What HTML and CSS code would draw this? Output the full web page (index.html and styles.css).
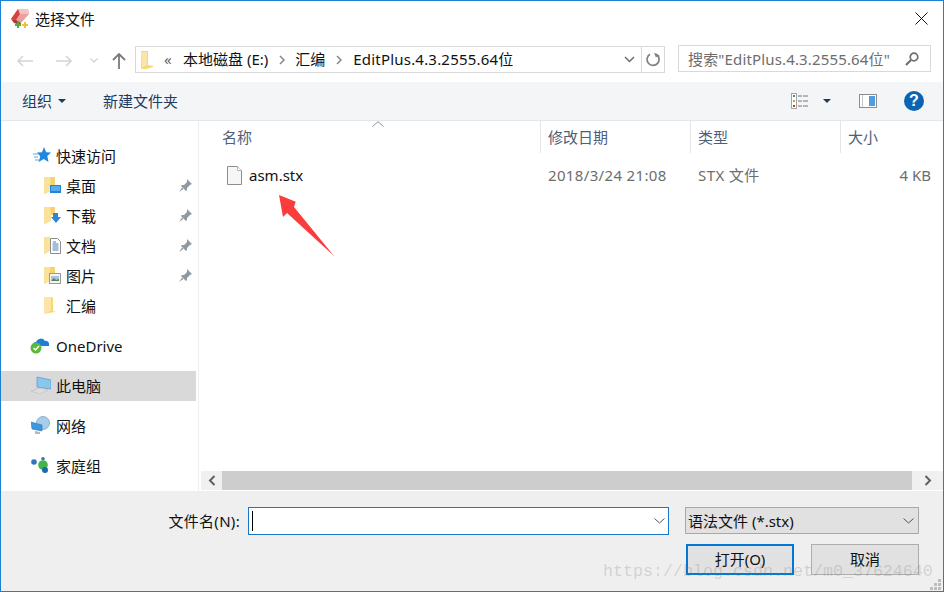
FILE: index.html
```html
<!DOCTYPE html>
<html lang="zh">
<head>
<meta charset="utf-8">
<title>选择文件</title>
<link rel="stylesheet" href="styles.css">
</head>
<body>
<div class="window">
  <div class="titlebar">
    <svg class="app-icon" width="20" height="20" viewBox="0 0 20 20"><path d="M1 11 8 1h10l1 5-8 9z" fill="#e8a0a0"/><path d="M1 11 8 1h5L6 12z" fill="#d8413c"/><path d="M1 11l5 1 5 3-1 2-6-2z" fill="#a83a34"/><path d="M8 1h10l1 5h-9z" fill="#f1c4c0"/><path d="M7 14h2v2h2v2H9v2H7v-2H5v-2h2z" fill="#57a845"/><path d="M14 14h2v2h2v2h-2v2h-2v-2h-2v-2h2z" fill="#e6c53d"/></svg>
    <span class="title">选择文件</span>
    <svg class="close" width="13" height="13" viewBox="0 0 13 13"><path d="M.5.5l12 12M12.500.5l-12 12" stroke="#111" fill="none"/></svg>
  </div>
  <div class="navrow">
    <svg class="nav-back" width="16" height="12" viewBox="0 0 16 12"><path d="M6 1 1 6l5 5M1 6h15" stroke="#d3d3d3" stroke-width="1.500" fill="none"/></svg>
    <svg class="nav-fwd" width="16" height="12" viewBox="0 0 16 12"><path d="M10 1l5 5-5 5M15 6H0" stroke="#d3d3d3" stroke-width="1.500" fill="none"/></svg>
    <svg class="nav-down" width="8" height="5" viewBox="0 0 8 5"><path d="M.5.500 4 4 7.500.500" stroke="#d3d3d3" stroke-width="1.300" fill="none"/></svg>
    <svg class="nav-up" width="14" height="16" viewBox="0 0 14 16"><path d="M1 7l6-6 6 6M7 1v15" stroke="#7a7a7a" stroke-width="1.800" fill="none"/></svg>
    <div class="address">
      <svg class="addr-folder" width="12" height="18" viewBox="0 0 12 18"><path d="M0 0h7v14l5 1v1l-7 2H1l-1-1z" fill="#f8d775"/><path d="M0 1h6v13l-5 3z" fill="#fbe6a8"/></svg>
      <span class="addr-more">«</span>
      <span class="crumb">本地磁盘 (E:)</span>
      <svg class="crumb-sep" width="6" height="10" viewBox="0 0 6 10"><path d="M1 1l4 4-4 4" stroke="#858585" stroke-width="1.500" fill="none"/></svg>
      <span class="crumb">汇编</span>
      <svg class="crumb-sep" width="6" height="10" viewBox="0 0 6 10"><path d="M1 1l4 4-4 4" stroke="#858585" stroke-width="1.500" fill="none"/></svg>
      <span class="crumb crumb-long">EditPlus.4.3.2555.64位</span>
      <svg class="addr-drop" width="11" height="7" viewBox="0 0 11 7"><path d="M1 1l4.500 4.500L10 1" stroke="#6d6d6d" stroke-width="1.500" fill="none"/></svg>
      <div class="addr-refresh">
        <svg width="15" height="15" viewBox="0 0 15 15"><path d="M10.300 2.300A6 6 0 1 1 4 2.200" stroke="#7f7f7f" stroke-width="1.700" fill="none"/><path d="M9 0v5h4z" fill="#7f7f7f" transform="rotate(-20 10 3)"/></svg>
      </div>
    </div>
    <div class="search">
      <span class="search-text">搜索"EditPlus.4.3.2555.64位"</span>
      <svg width="14" height="14" viewBox="0 0 14 14"><circle cx="9" cy="5" r="3.800" stroke="#6f6f6f" stroke-width="1.700" fill="none"/><path d="M6 8l-5 5" stroke="#6f6f6f" stroke-width="2.200"/></svg>
    </div>
  </div>
  <div class="toolbar">
    <span class="tool">组织</span>
    <span class="tool-caret"></span>
    <span class="tool tool-new">新建文件夹</span>
    <span class="tool-space"></span>
    <svg class="view-icon" width="18" height="16" viewBox="0 0 18 16"><rect x=".5" y=".5" width="5" height="15" fill="#fff" stroke="#a5a5a5"/><rect x="2" y="2" width="2" height="2" fill="#4a7eb0"/><rect x="2" y="7" width="2" height="2" fill="#c9a63c"/><rect x="2" y="12" width="2" height="2" fill="#b5472f"/><path d="M7 3h4m1 0h5M7 8h4m1 0h5M7 13h4m1 0h5" stroke="#6f7780"/></svg>
    <span class="tool-caret view-caret"></span>
    <svg class="pane-icon" width="18" height="14" viewBox="0 0 18 14"><rect x=".5" y=".5" width="17" height="13" fill="#fff" stroke="#8d8d8d"/><rect x="3" y="1" width="1" height="12" fill="#c5c5c5"/><rect x="10" y="2" width="6" height="10" fill="#4f9de0"/></svg>
    <span class="help">?</span>
  </div>
  <div class="content">
    <nav class="sidebar">
      <div class="nav-group">
        <div class="nav-item">
          <svg class="ico-top" width="18" height="16" viewBox="0 0 18 16"><path d="M11 0l2.200 5.200 4.800.3-3.700 3.600 1.200 5.900-4.800-3-5 3 1.500-5.800L4 5.500l5-.3z" fill="#1f88e0"/><path d="M0 7h5M1 10h4M2 13h4" stroke="#5ea9e6"/></svg>
          <span>快速访问</span>
        </div>
        <div class="nav-item sub">
          <svg class="ico-sub" width="17" height="18" viewBox="0 0 17 18"><path d="M0 1h6l1 1v13l-6 3H0z" fill="#fbe29a"/><path d="M6 1h5v8H7z" fill="#f7d26d"/><rect x="6" y="9" width="11" height="8" fill="#1f83d8"/><rect x="7" y="10" width="9" height="5" fill="#55acee"/></svg>
          <span class="nav-label">桌面</span>
          <svg class="pin" width="13" height="13" viewBox="0 0 13 13"><path d="M8 0l5 5-2 1-3 3 0 2-1 1-5-5 1-1 2 0 3-3zM3.500 8 0 13l5-3.500z" fill="#8f99a2"/></svg>
        </div>
        <div class="nav-item sub">
          <svg class="ico-sub" width="17" height="18" viewBox="0 0 17 18"><path d="M0 1h6l1 1v13l-6 3H0z" fill="#fbe29a"/><path d="M6 1h5v8H7z" fill="#f7d26d"/><path d="M9 7h5v4h3l-5 6-5-6h2z" fill="#2f86d6"/></svg>
          <span class="nav-label">下载</span>
          <svg class="pin" width="13" height="13" viewBox="0 0 13 13"><path d="M8 0l5 5-2 1-3 3 0 2-1 1-5-5 1-1 2 0 3-3zM3.500 8 0 13l5-3.500z" fill="#8f99a2"/></svg>
        </div>
        <div class="nav-item sub">
          <svg class="ico-sub" width="17" height="18" viewBox="0 0 17 18"><path d="M0 1h6v14l-5 3H0z" fill="#fbe29a"/><path d="M6.500 2.500h7l3 3v12h-10z" fill="#fff" stroke="#8d8d8d"/><path d="M9 6h3M8.500 8h6M8.500 10h6M8.500 12h6M8.500 14h6" stroke="#4a7eb0"/></svg>
          <span class="nav-label">文档</span>
          <svg class="pin" width="13" height="13" viewBox="0 0 13 13"><path d="M8 0l5 5-2 1-3 3 0 2-1 1-5-5 1-1 2 0 3-3zM3.500 8 0 13l5-3.500z" fill="#8f99a2"/></svg>
        </div>
        <div class="nav-item sub">
          <svg class="ico-sub" width="17" height="18" viewBox="0 0 17 18"><path d="M0 1h6v14l-5 3H0z" fill="#fbe29a"/><path d="M6 1h5v6H6z" fill="#f7d26d"/><rect x="5.500" y="7.500" width="11" height="10" fill="#f5f5f5" stroke="#9a9a9a"/><rect x="7" y="10" width="8" height="5" fill="#a8c4d8"/><path d="M7 15l3-3 2 2 3-1v2z" fill="#5f7f5f"/></svg>
          <span class="nav-label">图片</span>
          <svg class="pin" width="13" height="13" viewBox="0 0 13 13"><path d="M8 0l5 5-2 1-3 3 0 2-1 1-5-5 1-1 2 0 3-3zM3.500 8 0 13l5-3.500z" fill="#8f99a2"/></svg>
        </div>
        <div class="nav-item sub">
          <svg class="ico-sub" width="17" height="18" viewBox="0 0 17 18"><path d="M0 1h8l1 1v13l3 1-8 1-3 1H0z" fill="#f8d775"/><path d="M0 1h7v13l-6 4H0z" fill="#fbe6a8"/></svg>
          <span class="nav-label">汇编</span>
        </div>
      </div>
      <div class="nav-group">
        <div class="nav-item">
          <svg class="ico-top ico-od" width="19" height="18" viewBox="0 0 19 18"><path d="M3 9a3 3 0 0 1 3-3 5 5 0 0 1 9-1 3 3 0 0 1 4 3v2H3z" fill="#1c80d2"/><circle cx="6" cy="12" r="5.500" fill="#5cb83c"/><path d="M3.500 12l2 2 3.500-4" stroke="#fff" stroke-width="1.500" fill="none"/></svg>
          <span class="latin">OneDrive</span>
        </div>
      </div>
      <div class="nav-group">
        <div class="nav-item selected">
          <svg class="ico-top ico-pc" width="20" height="18" viewBox="0 0 20 18"><path d="M6 1l14 3v9L6 11z" fill="#8ac6ee" stroke="#5d9fd0" stroke-width=".8"/><path d="M0 15l9-3 8 2-8 4z" fill="#dddddd" stroke="#bdbdbd" stroke-width=".6"/></svg>
          <span>此电脑</span>
        </div>
      </div>
      <div class="nav-group">
        <div class="nav-item">
          <svg class="ico-top ico-net" width="19" height="18" viewBox="0 0 19 18"><circle cx="12" cy="7" r="6.500" fill="#a7cdea" stroke="#8db1cb"/><path d="M0 6l11 3v6L1 13z" fill="#3c97e0" stroke="#2a77b6" stroke-width=".6"/><path d="M4 15l5 1v2H4z" fill="#b9b9b9"/></svg>
          <span>网络</span>
        </div>
      </div>
      <div class="nav-group">
        <div class="nav-item">
          <svg class="ico-top ico-home" width="18" height="16" viewBox="0 0 18 16"><circle cx="3" cy="5" r="2.800" fill="#2f77bb"/><circle cx="12" cy="1.800" r="1.800" fill="#2f77bb"/><circle cx="12" cy="8" r="4.800" fill="#45b54a"/><circle cx="14" cy="13" r="3" fill="#1f69b0"/></svg>
          <span>家庭组</span>
        </div>
      </div>
    </nav>
    <main class="files">
      <div class="columns">
        <div class="col col-name">名称<svg class="sort" width="12" height="6" viewBox="0 0 12 6"><path d="M.5 5.500 6 .7l5.500 4.800" stroke="#8f8f8f" fill="none"/></svg></div>
        <div class="col col-date">修改日期</div>
        <div class="col col-type">类型</div>
        <div class="col col-size">大小</div>
      </div>
      <div class="rows">
        <div class="row">
          <div class="cell col-name name-cell">
            <svg width="15" height="19" viewBox="0 0 15 19"><path d="M.5.500h10l4 4v14H.5z" fill="#f4f6f7" stroke="#8e8e8e"/><path d="M10.500.500v4h4" fill="#fff" stroke="#b5b5b5"/></svg>
            <span class="fname">asm.stx</span>
          </div>
          <div class="cell col-date date-text">2018/3/24 21:08</div>
          <div class="cell col-type type-text">STX 文件</div>
          <div class="cell col-size size-cell">4 KB</div>
        </div>
      </div>
      <div class="hscroll">
        <span class="sc-btn"><svg width="8" height="11" viewBox="0 0 8 11"><path d="M6.500 1 2 5.500 6.500 10" stroke="#606060" stroke-width="2" fill="none"/></svg></span>
        <span class="sc-thumb"></span>
        <span class="sc-btn sc-right"><svg width="8" height="11" viewBox="0 0 8 11"><path d="M1.500 1 6 5.500 1.500 10" stroke="#606060" stroke-width="2" fill="none"/></svg></span>
      </div>
    </main>
  </div>
  <div class="footer">
    <div class="frow">
      <label class="flabel">文件名(N):</label>
      <div class="finput"><span class="caret"></span><svg width="11" height="6" viewBox="0 0 11 6"><path d="M.5.500 5.500 5l5-4.500" stroke="#555" fill="none"/></svg></div>
      <div class="fcombo"><span>语法文件 (*.stx)</span><svg width="11" height="6" viewBox="0 0 11 6"><path d="M.5.500 5.500 5l5-4.500" stroke="#555" fill="none"/></svg></div>
    </div>
    <div class="frow frow-btn">
      <button class="btn btn-primary">打开(O)</button>
      <button class="btn">取消</button>
    </div>
  </div>
  <svg class="arrow" width="60" height="66" viewBox="0 0 60 66"><path d="M0 0 16.700 6.700 15 12 55 61 8 18 4 22z" fill="#fb3c3c"/></svg>
  <div class="watermark">https://blog.csdn.net/m0_37624640</div>
  <svg class="grip" width="12" height="12" viewBox="0 0 12 12"><path d="M8 0h3v3H8zM4 4h3v3H4zM8 4h3v3H8zM0 8h3v3H0zM4 8h3v3H4zM8 8h3v3H8z" fill="#bdbdbd"/></svg>
</div>
</body>
</html>
```
FILE: styles.css
```css
* { box-sizing: border-box; }
html, body { margin: 0; padding: 0; }
body {
  width: 944px;
  height: 592px;
  overflow: hidden;
  background: #fff;
  font-family: "Noto Sans", "Noto Sans CJK SC", sans-serif;
  font-size: 15px;
  color: #111;
}
.window {
  position: relative;
  width: 944px;
  height: 592px;
  border: 1px solid #1b82d2;
  display: flex;
  flex-direction: column;
  background: #fff;
}
.titlebar {
  height: 38px;
  flex: none;
  display: flex;
  align-items: center;
  padding: 0 15px 4px 9px;
}
.title { margin-left: 5px; }
.close { margin-left: auto; }
.navrow {
  height: 43px;
  flex: none;
  display: flex;
  align-items: center;
  padding: 0 12px 0 16px;
}
.nav-fwd { margin-left: 23px; }
.nav-down { margin-left: 18px; }
.nav-up { margin-left: 14px; }
.address {
  margin: 0 0 2px 9px;
  width: 530px;
  height: 27px;
  flex: none;
  border: 1px solid #d9d9d9;
  display: flex;
  align-items: center;
  padding-left: 5px;
  line-height: 20px;
}
.addr-more { margin: 0 9px 2px 11px; color: #666; width: 10px; }
.crumb { white-space: nowrap; padding-bottom: 2px; }
.crumb-long { letter-spacing: .2px; margin-left: 1px; }
.crumb-sep { margin: 0 10px 0 11px; flex: none; }
.addr-drop { margin-left: auto; flex: none; }
.addr-refresh {
  margin-left: 6px;
  width: 23px;
  height: 25px;
  border-left: 1px solid #d9d9d9;
  display: flex;
  align-items: center;
  justify-content: center;
}
.search {
  margin: 0 0 4px 13px;
  width: 253px;
  height: 27px;
  flex: none;
  border: 1px solid #d9d9d9;
  display: flex;
  align-items: center;
  justify-content: space-between;
  padding: 0 11px 0 9px;
  color: #6d6d6d;
}
.search-text { white-space: nowrap; letter-spacing: .15px; padding-bottom: 1px; }
.toolbar {
  height: 39px;
  flex: none;
  background: #f4f5f7;
  border-bottom: 1px solid #e6e6e6;
  display: flex;
  align-items: center;
  padding: 0 19px 0 21px;
  color: #1e3a5f;
}
.tool { padding-bottom: 2px; }
.tool-caret {
  width: 0;
  height: 0;
  margin-left: 6px;
  border: 4px solid transparent;
  border-top: 4px solid #1e3a5f;
  border-bottom: 0;
}
.tool-new { margin-left: 37px; }
.tool-space { flex: 1; }
.view-caret { margin-left: 14px; }
.pane-icon { margin-left: 28px; }
.help {
  margin-left: 27px;
  width: 20px;
  height: 20px;
  border-radius: 50%;
  background: #0a64b4;
  color: #fff;
  font: bold 16px/20px "Liberation Sans", sans-serif;
  text-align: center;
}
.content {
  flex: 1;
  min-height: 0;
  display: flex;
}
.sidebar {
  width: 198px;
  flex: none;
  padding: 20px 2px 0 0;
  border-right: 1px solid #eceef0;
  display: flex;
  flex-direction: column;
  gap: 10px;
}
.nav-item {
  height: 30px;
  display: flex;
  align-items: center;
  padding: 0 0 2px 32px;
  white-space: nowrap;
}
.nav-item.sub { padding-left: 43px; padding-right: 4px; }
.ico-top { margin-right: 5px; flex: none; }
.ico-od { margin-left: -3px; margin-right: 7px; }
.ico-pc { margin-left: -2px; margin-right: 5px; }
.ico-net { margin-left: -2px; margin-right: 6px; }
.ico-home { margin-left: -2px; margin-right: 7px; }
.ico-sub { margin-right: 5px; flex: none; }
.latin { padding-top: 2px; }
.pin { margin-left: auto; }
.selected { background: #d9d9d9; }
.files {
  flex: 1;
  min-width: 0;
  display: flex;
  flex-direction: column;
  padding-left: 2px;
}
.columns {
  height: 32px;
  flex: none;
  display: flex;
  color: #4c607a;
}
.col {
  display: flex;
  align-items: center;
  border-right: 1px solid #e5e5e5;
  padding: 0 0 2px 7px;
  position: relative;
}
.cell { display: flex; align-items: center; padding-left: 7px; color: #6d6d6d; }
.col-name { width: 340px; padding-left: 21px; }
.col-date { width: 150px; }
.col-type { width: 150px; }
.col-size { width: 102px; border-right: 0; }
.sort { position: absolute; left: 171px; top: 0; }
.rows { flex: 1; padding-top: 10px; }
.row { height: 24px; display: flex; }
.name-cell { padding-left: 26px; color: #111; }
.fname { margin-left: 7px; }
.date-text { letter-spacing: .35px; }
.type-text { letter-spacing: .4px; padding-bottom: 2px; }
.size-cell { justify-content: flex-end; padding-right: 12px; }
.hscroll {
  height: 19px;
  margin-bottom: 1px;
  flex: none;
  display: flex;
  background: #f0f0f0;
}
.sc-btn {
  width: 21px;
  display: flex;
  align-items: center;
  justify-content: center;
}
.sc-thumb { width: 690px; background: #cdcdcd; }
.sc-right { margin-left: auto; width: 31px; }
.footer {
  height: 100px;
  flex: none;
  background: #efefef;
  padding: 16px 24px 0 0;
}
.frow {
  display: flex;
  justify-content: flex-end;
  align-items: center;
  height: 28px;
}
.frow-btn { margin-top: 9px; height: 31px; gap: 17px; }
.flabel { margin-right: 8px; padding-bottom: 2px; letter-spacing: .3px; }
.finput {
  width: 421px;
  height: 28px;
  margin-right: 16px;
  background: #fff;
  border: 1px solid #1a78c8;
  display: flex;
  align-items: center;
  justify-content: space-between;
  padding: 0 3px;
}
.caret { width: 1px; height: 20px; background: #000; }
.fcombo {
  width: 234px;
  height: 27px;
  margin-top: -1px;
  background: #e1e1e1;
  border: 1px solid #a8a8a8;
  display: flex;
  align-items: center;
  justify-content: space-between;
  padding: 0 4px 0 2px;
}
.btn {
  width: 108px;
  height: 31px;
  background: #e1e1e1;
  border: 1px solid #adadad;
  font: inherit;
  color: #111;
  padding: 0 0 3px;
}
.btn-primary { border: 2px solid #0078d7; }
.arrow { position: absolute; left: 278px; top: 194px; }
.watermark {
  position: absolute;
  left: 602px;
  top: 561px;
  font: 16.670px/20px "Liberation Mono", monospace;
  color: rgba(120, 120, 120, 0.25);
  white-space: nowrap;
}
.grip { position: absolute; right: 1px; bottom: 0; }
```
